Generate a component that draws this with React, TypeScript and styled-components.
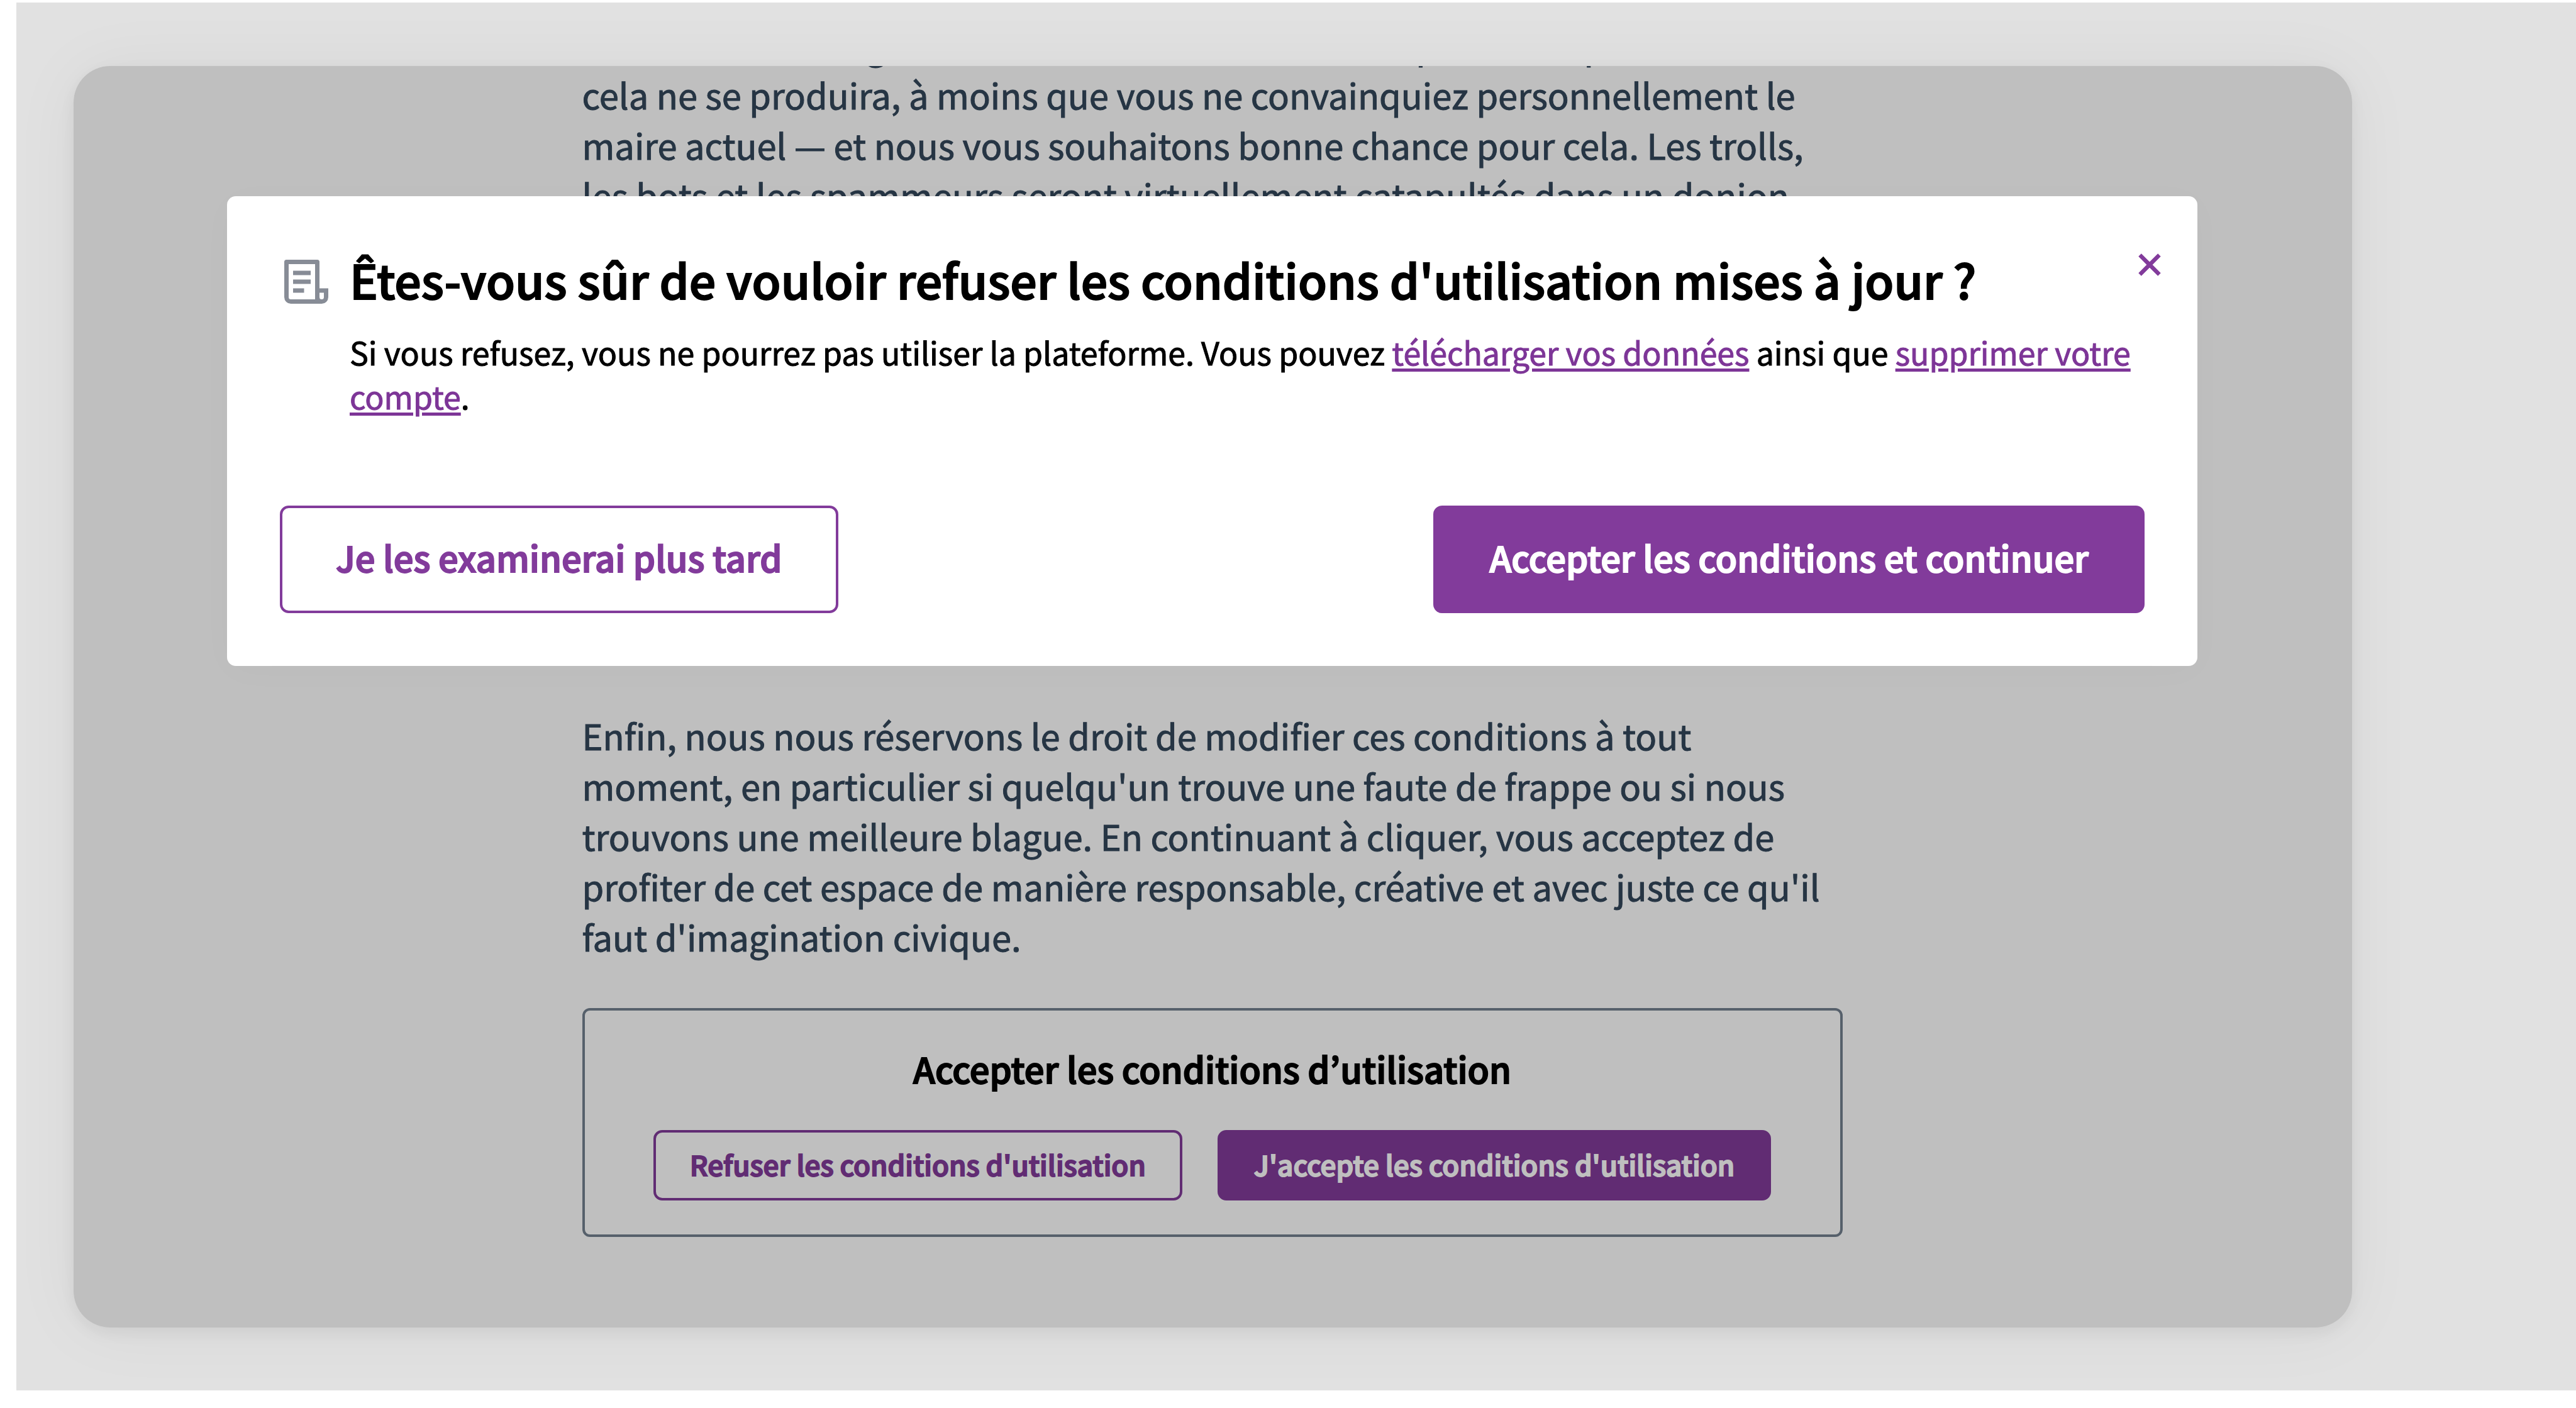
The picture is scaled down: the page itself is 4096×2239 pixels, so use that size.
import React from "react";
import styled, { createGlobalStyle, css } from "styled-components";

const GlobalStyle = createGlobalStyle`
  *, *::before, *::after { box-sizing: border-box; }
  html, body { margin: 0; background: #ffffff; }
  body, button {
    font-family: "Noto Sans CJK KR", "Noto Sans", sans-serif;
  }
  h1, h2, p { margin: 0; }
`;

/* Semi-bold sits between the family's medium and bold cuts. */
const semiBold = css`
  font-weight: 500;
  -webkit-text-stroke: 2px currentColor;
`;

const Page = styled.div`
  display: flex;
  flex-direction: column;
  height: 100vh;
  padding: 4px 0 28px 26px;
`;

const Backdrop = styled.main`
  display: flex;
  flex: 1;
  min-height: 0;
  padding: 101px 356px 100px 91px;
  background: #e1e1e1;
  overflow: hidden;
`;

const Sheet = styled.div`
  position: relative;
  flex: 1;
  display: flex;
  border-radius: 58px;
  box-shadow: 0 8px 24px rgba(0, 0, 0, 0.06), 0 4px 110px rgba(0, 0, 0, 0.05);
`;

const SheetBody = styled.div`
  flex: 1;
  display: flex;
  flex-direction: column;
  justify-content: flex-end;
  align-items: center;
  padding: 0 2px 144px 0;
  border-radius: 58px;
  background: #bfbfbf;
  overflow: hidden;
`;

const Article = styled.article`
  width: 2004px;
  max-width: 100%;
  flex: none;
  color: #263544;
  font-size: 56px;
  line-height: 80px;
  -webkit-text-stroke: 1px currentColor;
`;

const Intro = styled.p`
  margin-bottom: 779px;
`;

const Closing = styled.p`
  margin-bottom: 74px;
`;

const Consent = styled.section`
  display: flex;
  flex-direction: column;
  gap: 58px;
  padding: 52px 52px 54px;
  border: 4px solid #56606b;
  border-radius: 12px;
`;

const ConsentTitle = styled.h2`
  color: #000000;
  font-size: 56px;
  ${semiBold}
  line-height: 80px;
  text-align: center;
`;

const ConsentActions = styled.div`
  display: flex;
  justify-content: center;
  gap: 56px;
`;

const Button = styled.button<{ $solid?: boolean; $dim?: boolean; $large?: boolean }>`
  border: 4px solid ${(p) => (p.$dim ? "#612c73" : "#823b9b")};
  border-radius: 14px;
  ${semiBold}
  white-space: nowrap;
  background: transparent;
  color: ${(p) => (p.$dim ? "#612c73" : "#823b9b")};
  ${(p) =>
    p.$large
      ? css`
          padding: 38px 85px 46px;
          font-size: 56px;
          line-height: 79px;
        `
      : css`
          padding: 20px 54px 24px;
          font-size: 44px;
          line-height: 60px;
        `}
  ${(p) =>
    p.$solid &&
    css`
      background: ${p.$dim ? "#612c73" : "#823b9b"};
      color: ${p.$dim ? "#bfbfbf" : "#ffffff"};
    `}
`;

const Dialog = styled.div`
  position: absolute;
  top: 207px;
  left: 244px;
  right: 246px;
  display: flex;
  flex-direction: column;
  gap: 140px;
  padding: 84px;
  border-radius: 14px;
  background: #ffffff;
  box-shadow: 0 8px 60px rgba(0, 0, 0, 0.02);
`;

const DialogHead = styled.div`
  display: flex;
  align-items: flex-start;
  gap: 27px;
`;

const NoticeIcon = styled.svg`
  flex: none;
  width: 84px;
  height: 84px;
  margin-top: 10px;
  fill: #878c96;
`;

const DialogText = styled.div`
  flex: 1;
  display: flex;
  flex-direction: column;
  gap: 32px;
  color: #000000;
`;

const DialogTitle = styled.h1`
  font-size: 75px;
  ${semiBold}
  line-height: 96px;
`;

const DialogCopy = styled.p`
  font-size: 50px;
  line-height: 70px;
  -webkit-text-stroke: 1px currentColor;
`;

const TextLink = styled.a`
  color: #7d3597;
  text-decoration: underline;
  text-decoration-thickness: 5px;
  text-underline-offset: 5px;
`;

const DialogActions = styled.div`
  display: flex;
  justify-content: space-between;
`;

const CloseButton = styled.button`
  position: absolute;
  top: 77px;
  right: 44px;
  display: flex;
  padding: 0;
  border: 0;
  background: none;
  svg {
    width: 64px;
    height: 64px;
    fill: #823b9b;
    stroke: #823b9b;
    stroke-width: 0.4;
  }
`;

export default function App() {
  return (
    <Page>
      <GlobalStyle />
      <Backdrop>
        <Sheet>
          <SheetBody>
            <Article>
              <Intro>
                la couronne et bague de notre ville. Et rien ne nous prouvera que
                <br />
                cela ne se produira, à moins que vous ne convainquiez personnellement le
                <br />
                maire actuel — et nous vous souhaitons bonne chance pour cela. Les trolls,
                <br />
                les bots et les spammeurs seront virtuellement catapultés dans un donjon
              </Intro>
              <Closing>
                Enfin, nous nous réservons le droit de modifier ces conditions à tout
                <br />
                moment, en particulier si quelqu'un trouve une faute de frappe ou si nous
                <br />
                trouvons une meilleure blague. En continuant à cliquer, vous acceptez de
                <br />
                profiter de cet espace de manière responsable, créative et avec juste ce qu'il
                <br />
                faut d'imagination civique.
              </Closing>
              <Consent>
                <ConsentTitle>Accepter les conditions d’utilisation</ConsentTitle>
                <ConsentActions>
                  <Button type="button" $dim>
                    Refuser les conditions d'utilisation
                  </Button>
                  <Button type="button" $dim $solid>
                    J'accepte les conditions d'utilisation
                  </Button>
                </ConsentActions>
              </Consent>
            </Article>
          </SheetBody>
          <Dialog role="dialog" aria-modal="true" aria-labelledby="dialog-title">
            <DialogHead>
              <NoticeIcon viewBox="0 0 24 24" aria-hidden="true">
                <path d="M19 22H5a3 3 0 0 1-3-3V3a1 1 0 0 1 1-1h14a1 1 0 0 1 1 1v12h4v4a3 3 0 0 1-3 3zm-1-5v2a1 1 0 0 0 2 0v-2h-2zm-2 3V4H4v15a1 1 0 0 0 1 1h11zM6 7h8v2H6V7zm0 4h8v2H6v-2zm0 4h5v2H6v-2z" />
              </NoticeIcon>
              <DialogText>
                <DialogTitle id="dialog-title">
                  Êtes-vous sûr de vouloir refuser les conditions d'utilisation mises à jour ?
                </DialogTitle>
                <DialogCopy>
                  Si vous refusez, vous ne pourrez pas utiliser la plateforme. Vous pouvez{" "}
                  <TextLink href="#donnees">télécharger vos données</TextLink> ainsi que{" "}
                  <TextLink href="#compte">supprimer votre compte</TextLink>.
                </DialogCopy>
              </DialogText>
            </DialogHead>
            <DialogActions>
              <Button type="button" $large>
                Je les examinerai plus tard
              </Button>
              <Button type="button" $large $solid>
                Accepter les conditions et continuer
              </Button>
            </DialogActions>
            <CloseButton type="button" aria-label="Fermer">
              <svg viewBox="0 0 24 24" aria-hidden="true">
                <path d="M12 10.586l4.95-4.95 1.414 1.414-4.95 4.95 4.95 4.95-1.414 1.414-4.95-4.95-4.95 4.95-1.414-1.414 4.95-4.95-4.95-4.95L7.05 5.636z" />
              </svg>
            </CloseButton>
          </Dialog>
        </Sheet>
      </Backdrop>
    </Page>
  );
}
